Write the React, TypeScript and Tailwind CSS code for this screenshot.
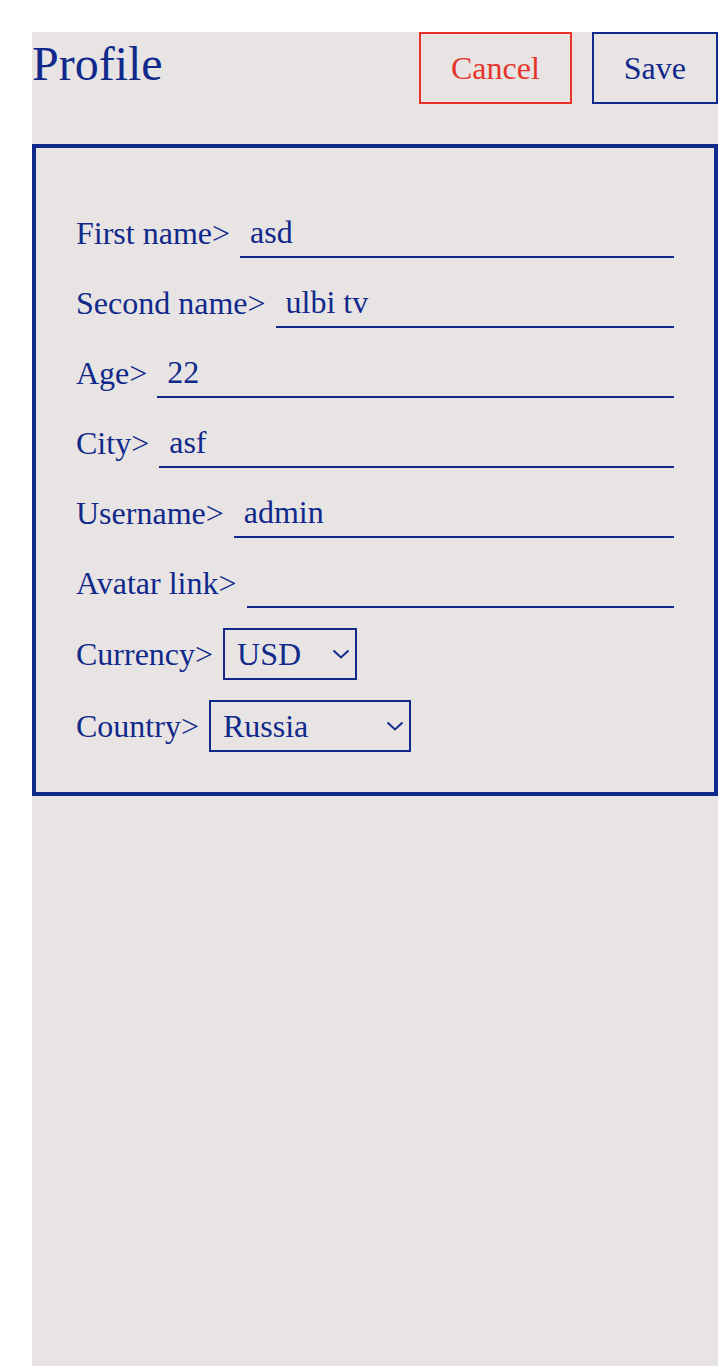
import { useState } from "react";

const Chevron = () => (
  <svg
    width="18"
    height="10"
    viewBox="0 0 18 10"
    fill="none"
    className="pointer-events-none absolute right-[7px] top-1/2 -translate-y-1/2"
  >
    <path d="M1.5 1.5 L9 8.5 L16.5 1.5" stroke="#11298b" strokeWidth="2" />
  </svg>
);

const fields = [
  { label: "First name>", value: "asd" },
  { label: "Second name>", value: "ulbi tv" },
  { label: "Age>", value: "22" },
  { label: "City>", value: "asf" },
  { label: "Username>", value: "admin" },
  { label: "Avatar link>", value: "" },
];

const App = () => {
  const [currency, setCurrency] = useState("USD");
  const [country, setCountry] = useState("Russia");

  return (
    <div
      className="min-h-screen bg-white pl-8 pt-8 text-[#11298b]"
      style={{ fontFamily: '"Liberation Serif", "Times New Roman", serif' }}
    >
      <div className="min-h-[1334px] bg-[#e8e4e4]">
        {/* Header */}
        <div className="flex h-[72px] items-start justify-between">
          <h1 className="mt-1 text-[48px] leading-[normal]">Profile</h1>
          <div className="flex gap-5">
            <button className="h-[72px] border-2 border-[#e5352a] px-[30px] text-[32px] text-[#e5352a]">
              Cancel
            </button>
            <button className="h-[72px] border-2 border-[#11298b] px-[30px] text-[32px]">
              Save
            </button>
          </div>
        </div>

        {/* Card */}
        <div className="mt-10 flex flex-col gap-5 border-4 border-[#11298b] px-10 pb-10 pt-[60px] text-[32px]">
          {fields.map((f) => (
            <div key={f.label} className="flex h-[50px] items-center gap-[10px]">
              <span className="whitespace-nowrap">{f.label}</span>
              <input
                defaultValue={f.value}
                className="h-[50px] min-w-0 flex-1 border-b-2 border-[#11298b] bg-transparent px-[10px] text-[32px] text-[#11298b] outline-none"
              />
            </div>
          ))}

          <div className="flex h-[52px] items-center gap-[10px]">
            <span>Currency&gt;</span>
            <div className="relative">
              <select
                value={currency}
                onChange={(e) => setCurrency(e.target.value)}
                className="h-[52px] w-[134px] appearance-none border-2 border-[#11298b] bg-transparent pl-3 text-[32px] text-[#11298b] outline-none"
              >
                <option>RUB</option>
                <option>EUR</option>
                <option>USD</option>
              </select>
              <Chevron />
            </div>
          </div>

          <div className="flex h-[52px] items-center gap-[10px]">
            <span>Country&gt;</span>
            <div className="relative">
              <select
                value={country}
                onChange={(e) => setCountry(e.target.value)}
                className="h-[52px] w-[202px] appearance-none border-2 border-[#11298b] bg-transparent pl-3 text-[32px] text-[#11298b] outline-none"
              >
                <option>Armenia</option>
                <option>Russia</option>
                <option>Belarus</option>
                <option>Kazakhstan</option>
                <option>Ukraine</option>
              </select>
              <Chevron />
            </div>
          </div>
        </div>
      </div>
    </div>
  );
};

export default App;
